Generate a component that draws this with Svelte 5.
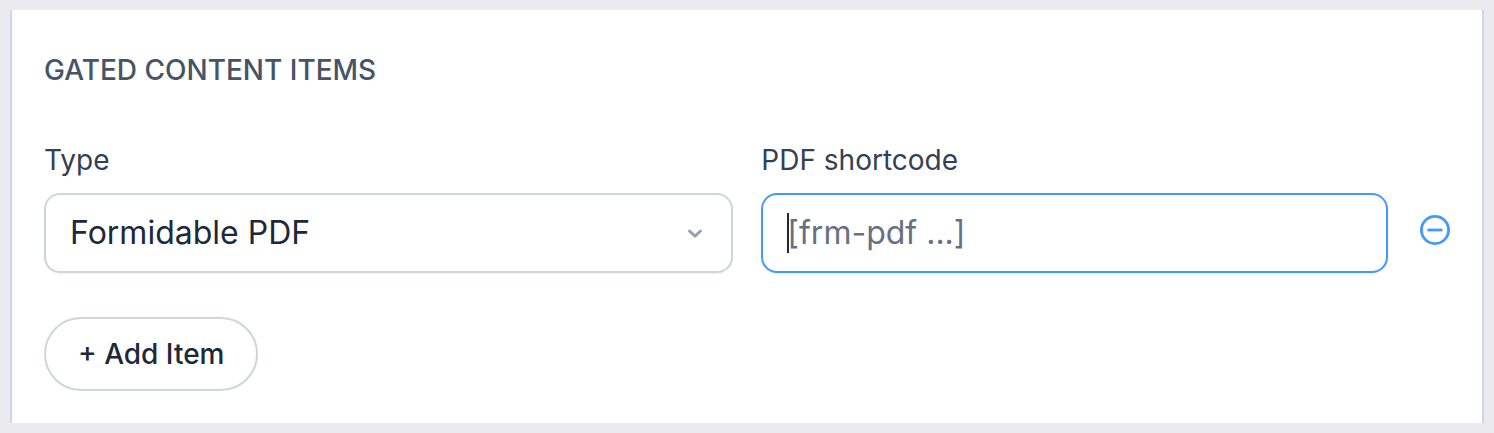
<script>
  let items = $state([{ id: 1, type: 'pdf', shortcode: '' }]);
  let activeId = $state(1);
  let nextId = 2;

  function addItem() {
    items.push({ id: nextId++, type: 'pdf', shortcode: '' });
  }

  function removeItem(id) {
    items = items.filter((item) => item.id !== id);
  }
</script>

<div class="page">
  <section class="panel">
    <h3>GATED CONTENT ITEMS</h3>

    {#each items as item (item.id)}
      <div class="row">
        <div class="field type">
          <label for="type-{item.id}">Type</label>
          <div class="control">
            <select id="type-{item.id}" bind:value={item.type}>
              <option value="pdf">Formidable PDF</option>
            </select>
            <svg class="chevron" viewBox="0 0 16 10" aria-hidden="true">
              <path d="M2.5 2 L8 7.2 L13.5 2" />
            </svg>
          </div>
        </div>

        <div class="field shortcode">
          <label for="shortcode-{item.id}">PDF shortcode</label>
          <div class="control">
            <input
              id="shortcode-{item.id}"
              class:active={activeId === item.id}
              type="text"
              placeholder="[frm-pdf ...]"
              bind:value={item.shortcode}
              onfocus={() => (activeId = item.id)}
            />
            {#if activeId === item.id && !item.shortcode}
              <span class="caret"></span>
            {/if}
          </div>
        </div>

        <button class="remove" aria-label="Remove item" onclick={() => removeItem(item.id)}>
          <svg viewBox="0 0 30 30" aria-hidden="true">
            <circle cx="15" cy="15" r="13.6" />
            <path d="M7.5 15 H22.5" />
          </svg>
        </button>
      </div>
    {/each}

    <button class="add" onclick={addItem}>+ Add Item</button>
  </section>
</div>

<style>
  :global(body) {
    background: #eaeaef;
  }

  .page {
    padding: 10px;
    font-family: Inter, 'Liberation Sans', sans-serif;
  }

  .panel {
    padding: 42px 32px 32px;
    border: solid #d0d5dd;
    border-width: 0 2px;
    background: #fff;
  }

  h3 {
    margin: 0 0 55px;
    font-size: 28px;
    line-height: 36px;
    font-weight: 500;
    color: #475467;
  }

  .row {
    display: flex;
    align-items: flex-end;
    margin-bottom: 44px;
  }

  .field {
    display: flex;
    flex-direction: column;
    gap: 16px;
    min-width: 0;
  }

  .type {
    flex: 11;
    margin-right: 28px;
  }

  .shortcode {
    flex: 10;
    margin-right: 32px;
  }

  label {
    font-size: 28px;
    line-height: 34px;
    color: #344054;
  }

  .control {
    position: relative;
  }

  select,
  input {
    display: block;
    box-sizing: border-box;
    width: 100%;
    height: 80px;
    padding: 0 24px 2px;
    border: 2px solid #d0d5dd;
    border-radius: 16px;
    outline: none;
    background: #fff;
    font-family: inherit;
    font-size: 32px;
    color: #1d2939;
    appearance: none;
    box-shadow: 0 1px 2px rgba(16, 24, 40, 0.06);
  }

  input.active {
    border-color: #4199fd;
  }

  /* the drawn caret stands in for the native one while the field is empty */
  input:placeholder-shown {
    caret-color: transparent;
  }

  input::placeholder {
    color: #667085;
    opacity: 1;
  }

  .chevron {
    position: absolute;
    top: 36px;
    right: 30px;
    width: 16px;
    height: 10px;
    fill: none;
    stroke: #98a2b3;
    stroke-width: 3;
    stroke-linecap: round;
    stroke-linejoin: round;
    pointer-events: none;
  }

  .caret {
    position: absolute;
    top: 20px;
    left: 26px;
    width: 2px;
    height: 40px;
    background: #1d2939;
    pointer-events: none;
  }

  button {
    font-family: inherit;
    cursor: pointer;
  }

  .remove {
    display: flex;
    align-items: center;
    height: 86px;
    padding: 0;
    border: 0;
    background: none;
  }

  .remove svg {
    width: 30px;
    height: 30px;
    fill: none;
    stroke: #4199fd;
    stroke-width: 2.8;
  }

  .add {
    display: block;
    height: 74px;
    padding: 0 32px;
    border: 2px solid #d0d5dd;
    border-radius: 37px;
    background: #fff;
    font-size: 28px;
    font-weight: 500;
    color: #1d2939;
  }
</style>
